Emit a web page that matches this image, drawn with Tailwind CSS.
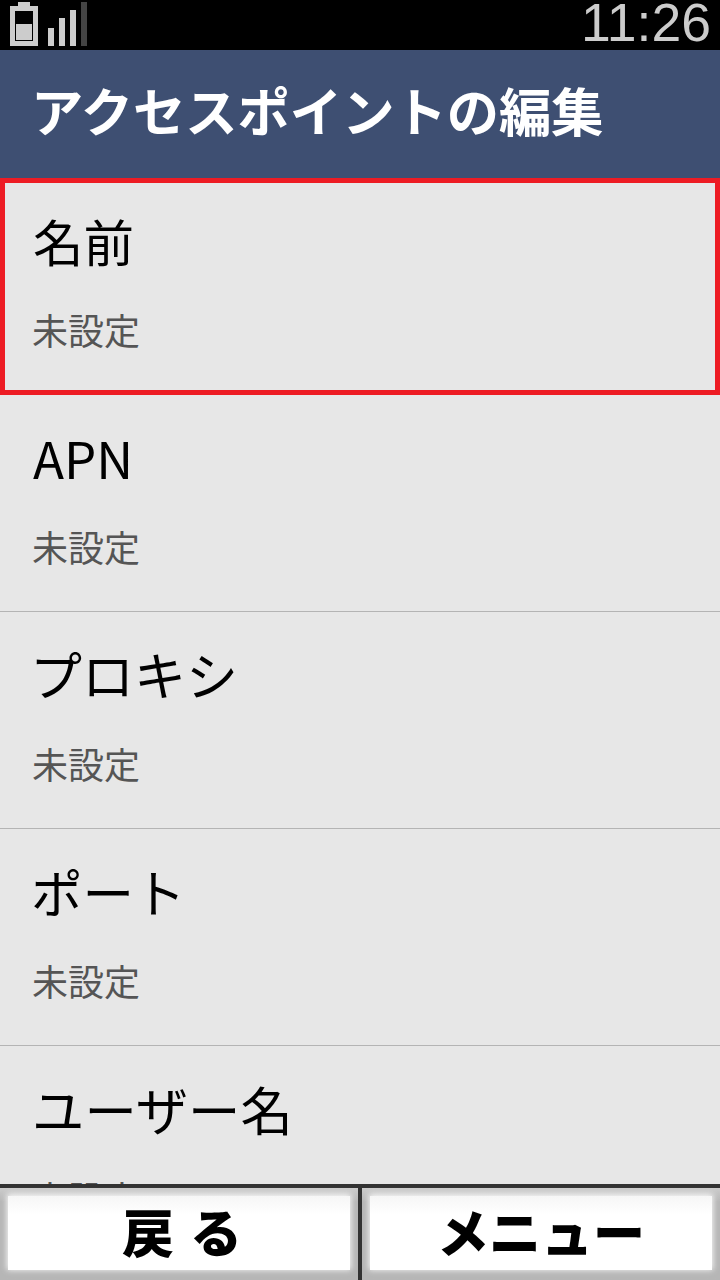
<!DOCTYPE html>
<html lang="ja">
<head>
    <meta charset="utf-8">
    <title>アクセスポイントの編集</title>
    <script src="https://cdn.jsdelivr.net/npm/@tailwindcss/browser@4"></script>
</head>
<body class="bg-[#e7e7e7] font-['Noto_Sans_CJK_JP',sans-serif]">
    <div class="w-[720px] h-[1280px] flex flex-col overflow-hidden">
        <!-- status bar -->
        <div class="h-[50px] shrink-0 bg-black flex items-start justify-between">
            <svg width="100" height="50" viewBox="0 0 100 50">
                <path fill="#cccccc" fill-rule="evenodd" d="M18 2h12v4h8v40H10V6h8zM15 11v30h18V11z"/>
                <rect x="16" y="24" width="16" height="16" fill="#cccccc"/>
                <rect x="48" y="28" width="6" height="18" fill="#cccccc"/>
                <rect x="59" y="18" width="6" height="28" fill="#cccccc"/>
                <rect x="70" y="10" width="6" height="36" fill="#cccccc"/>
                <rect x="81" y="2" width="6" height="44" fill="#444444"/>
            </svg>
            <div class="pr-[9px] text-[53.5px] leading-[46px] text-[#cccccc] font-['Liberation_Sans',sans-serif]">11:26</div>
        </div>

        <!-- header -->
        <div class="h-[128px] shrink-0 bg-[#3e4f72] flex items-center pl-[31px] pb-[10px]">
            <h1 class="text-[52.3px] leading-none font-bold text-white">アクセスポイントの編集</h1>
        </div>

        <!-- list -->
        <div class="flex-1 min-h-0 overflow-hidden">
            <div class="h-[217px] border-[5px] border-[#ed1c24] pl-[28px] pt-[27px]">
                <div class="text-[50.5px] leading-[60px] text-black">名前</div>
                <div class="mt-[37px] -ml-px text-[36px] leading-[44px] text-[#555555]">未設定</div>
            </div>
            <div class="h-[217px] border-b border-[#b4b4b4] pl-[33px] pt-[32px]">
                <div class="text-[51px] leading-[60px] text-black">APN</div>
                <div class="mt-[37px] -ml-px text-[36px] leading-[44px] text-[#555555]">未設定</div>
            </div>
            <div class="h-[217px] border-b border-[#b4b4b4] pl-[30px] pt-[32px]">
                <div class="text-[52px] leading-[60px] text-black">プロキシ</div>
                <div class="mt-[37px] ml-[2px] text-[36px] leading-[44px] text-[#555555]">未設定</div>
            </div>
            <div class="h-[217px] border-b border-[#b4b4b4] pl-[31px] pt-[32px]">
                <div class="text-[51.5px] leading-[60px] text-black">ポート</div>
                <div class="mt-[37px] ml-[1px] text-[36px] leading-[44px] text-[#555555]">未設定</div>
            </div>
            <div class="h-[217px] pl-[32px] pt-[32px]">
                <div class="text-[52.4px] leading-[60px] text-black">ユーザー名</div>
                <div class="mt-[37px] text-[36px] leading-[44px] text-[#555555]">未設定</div>
            </div>
        </div>

        <!-- footer buttons -->
        <div class="h-[96px] shrink-0 border-t-4 border-[#333333] flex bg-[#333333] gap-[4px]">
            <div class="w-[358px] h-full bg-gradient-to-b from-[#cccccc] to-[#b6b6b6] to-[15%] p-[8px] pb-[10px]">
                <div class="h-full bg-gradient-to-b from-[#f6f6f6] to-white to-[25%] shadow-[0_-1px_6px_1px_rgba(255,255,255,0.9)] flex items-center justify-center pb-[5px] pl-[8px] text-[52px] tracking-[2px] leading-none font-black text-black">戻 る</div>
            </div>
            <div class="flex-1 h-full bg-gradient-to-b from-[#cccccc] to-[#b6b6b6] to-[15%] p-[8px] pb-[10px]">
                <div class="h-full bg-gradient-to-b from-[#f6f6f6] to-white to-[25%] shadow-[0_-1px_6px_1px_rgba(255,255,255,0.9)] flex items-center justify-center pb-[5px] text-[52px] leading-none font-black text-black">メニュー</div>
            </div>
        </div>
    </div>
</body>
</html>
